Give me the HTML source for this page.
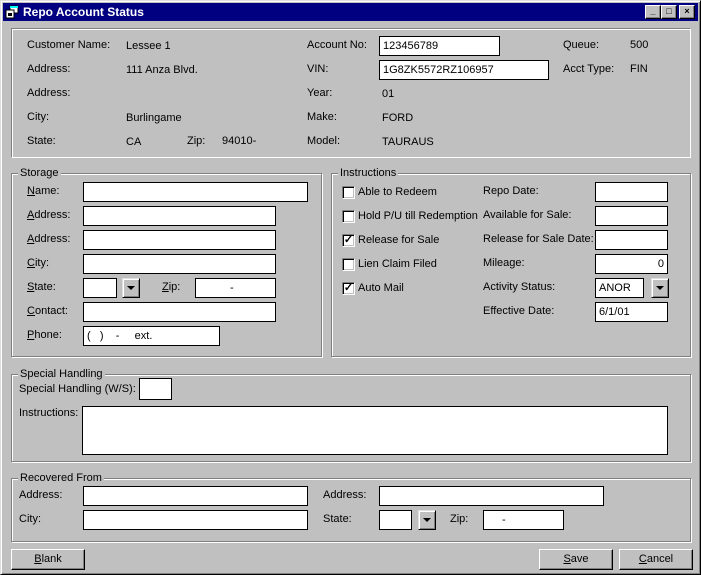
<!DOCTYPE html>
<html><head><meta charset="utf-8"><style>
*{box-sizing:border-box;margin:0;padding:0}
body{width:701px;height:575px;background:#c0c0c0;font-family:"Liberation Sans",Arial,sans-serif;font-size:11px;color:#000;position:relative;overflow:hidden}
.win{position:absolute;left:0;top:0;width:701px;height:575px;border:1px solid;border-color:#dfdfdf #000 #000 #dfdfdf;box-shadow:inset 1px 1px #fff,inset -1px -1px #808080}
.tb{position:absolute;left:3px;top:3px;width:695px;height:18px;background:#000080;color:#fff;font-weight:bold;font-size:12px;line-height:18px;padding-left:20px}
.tbtn{position:absolute;top:5px;width:16px;height:14px;background:#c0c0c0;border:1px solid;border-color:#fff #000 #000 #fff;box-shadow:inset -1px -1px #808080;font-size:9px;line-height:11px;text-align:center;color:#000;font-weight:bold}
.a{position:absolute;white-space:nowrap}
.l{position:absolute;white-space:nowrap;line-height:13px}
.in{position:absolute;background:#fff;border:1px solid #000;height:20px;line-height:18px;padding-left:3px;white-space:nowrap}
.sunk{position:absolute;border:1px solid;border-color:#808080 #fff #fff #808080;box-shadow:inset 1px 1px #fff00,inset 0 0 #fff}
.grp{position:absolute;border:1px solid #808080;box-shadow:1px 1px #fff,inset 1px 1px #fff}
.gl{position:absolute;left:6px;top:-7px;background:#c0c0c0;padding:0 2px;line-height:13px}
.dd{position:absolute;width:18px;height:20px;background:#c0c0c0;border:1px solid;border-color:#dfdfdf #000 #000 #dfdfdf;box-shadow:inset 1px 1px #fff,inset -1px -1px #808080}
.dd:after{content:"";position:absolute;left:4px;top:7px;border-left:4px solid transparent;border-right:4px solid transparent;border-top:4px solid #000}
.cb{position:absolute;width:13px;height:13px;background:#fff;border:1px solid;border-color:#808080 #fff #fff #808080;box-shadow:inset 1px 1px #000,inset -1px -1px #c0c0c0;font-size:11px;line-height:11px;text-align:center;font-weight:bold}
.btn{position:absolute;height:21px;background:#c0c0c0;border:1px solid;border-color:#fff #000 #000 #fff;box-shadow:inset -1px -1px #808080;text-align:center;line-height:19px}
u{text-decoration:underline}
</style></head><body>
<div class="win"></div>
<div class="tb">Repo Account Status</div>
<svg class="a" style="left:5px;top:5px" width="14" height="14"><rect x="5" y="1" width="8" height="7" fill="#fff" stroke="#000"/><rect x="5" y="1" width="8" height="2" fill="#0ff"/><rect x="1" y="5" width="8" height="8" fill="#fff" stroke="#000"/><rect x="3" y="8" width="4" height="3" fill="#000"/></svg>
<div class="tbtn" style="left:645px">_</div>
<div class="tbtn" style="left:661px">□</div>
<div class="tbtn" style="left:679px;margin-left:0">×</div>

<div class="sunk" style="left:11px;top:28px;width:680px;height:130px;border-color:#808080 #fff #fff #808080;box-shadow:1px 1px #fff inset"></div>
<div class="l" style="left:27px;top:39px">Customer Name:</div><div class="l" style="left:126px;top:40px">Lessee 1</div>
<div class="l" style="left:27px;top:63px">Address:</div><div class="l" style="left:126px;top:64px">111 Anza Blvd.</div>
<div class="l" style="left:27px;top:87px">Address:</div>
<div class="l" style="left:27px;top:111px">City:</div><div class="l" style="left:126px;top:112px">Burlingame</div>
<div class="l" style="left:27px;top:135px">State:</div><div class="l" style="left:126px;top:136px">CA</div>
<div class="l" style="left:187px;top:135px">Zip:</div><div class="l" style="left:222px;top:135px">94010-</div>
<div class="l" style="left:307px;top:39px">Account No:</div><div class="in" style="left:379px;top:36px;width:121px">123456789</div>
<div class="l" style="left:307px;top:63px">VIN:</div><div class="in" style="left:379px;top:60px;width:170px">1G8ZK5572RZ106957</div>
<div class="l" style="left:307px;top:87px">Year:</div><div class="l" style="left:382px;top:88px">01</div>
<div class="l" style="left:307px;top:111px">Make:</div><div class="l" style="left:382px;top:112px">FORD</div>
<div class="l" style="left:307px;top:135px">Model:</div><div class="l" style="left:382px;top:136px">TAURAUS</div>
<div class="l" style="left:563px;top:39px">Queue:</div><div class="l" style="left:630px;top:39px">500</div>
<div class="l" style="left:563px;top:63px">Acct Type:</div><div class="l" style="left:630px;top:63px">FIN</div>

<div class="grp" style="left:11px;top:173px;width:311px;height:184px"><div class="gl">Storage</div></div>
<div class="l" style="left:27px;top:185px"><u>N</u>ame:</div><div class="in" style="left:83px;top:182px;width:225px"></div>
<div class="l" style="left:27px;top:209px"><u>A</u>ddress:</div><div class="in" style="left:83px;top:206px;width:193px"></div>
<div class="l" style="left:27px;top:233px"><u>A</u>ddress:</div><div class="in" style="left:83px;top:230px;width:193px"></div>
<div class="l" style="left:27px;top:257px"><u>C</u>ity:</div><div class="in" style="left:83px;top:254px;width:193px"></div>
<div class="l" style="left:27px;top:281px"><u>S</u>tate:</div><div class="in" style="left:83px;top:278px;width:34px"></div><div class="dd" style="left:122px;top:278px"></div>
<div class="l" style="left:162px;top:281px"><u>Z</u>ip:</div><div class="in" style="left:195px;top:278px;width:81px;padding-left:34px">-</div>
<div class="l" style="left:27px;top:305px"><u>C</u>ontact:</div><div class="in" style="left:83px;top:302px;width:193px"></div>
<div class="l" style="left:27px;top:329px"><u>P</u>hone:</div><div class="in" style="left:83px;top:326px;width:137px">(&nbsp;&nbsp;&nbsp;)&nbsp;&nbsp;&nbsp;&nbsp;-&nbsp;&nbsp;&nbsp;&nbsp;&nbsp;ext.</div>

<div class="grp" style="left:331px;top:173px;width:360px;height:184px"><div class="gl">Instructions</div></div>
<div class="cb" style="left:342px;top:186px"></div><div class="l" style="left:358px;top:186px">Able to Redeem</div>
<div class="cb" style="left:342px;top:210px"></div><div class="l" style="left:358px;top:210px">Hold P/U till Redemption</div>
<div class="cb" style="left:342px;top:234px">✓</div><div class="l" style="left:358px;top:234px">Release for Sale</div>
<div class="cb" style="left:342px;top:258px"></div><div class="l" style="left:358px;top:258px">Lien Claim Filed</div>
<div class="cb" style="left:342px;top:282px">✓</div><div class="l" style="left:358px;top:282px">Auto Mail</div>
<div class="l" style="left:483px;top:185px">Repo Date:</div><div class="in" style="left:595px;top:182px;width:73px"></div>
<div class="l" style="left:483px;top:209px">Available for Sale:</div><div class="in" style="left:595px;top:206px;width:73px"></div>
<div class="l" style="left:483px;top:233px">Release for Sale Date:</div><div class="in" style="left:595px;top:230px;width:73px"></div>
<div class="l" style="left:483px;top:257px">Mileage:</div><div class="in" style="left:595px;top:254px;width:73px;text-align:right;padding-right:3px">0</div>
<div class="l" style="left:483px;top:281px">Activity Status:</div><div class="in" style="left:595px;top:278px;width:49px">ANOR</div><div class="dd" style="left:651px;top:278px"></div>
<div class="l" style="left:483px;top:305px">Effective Date:</div><div class="in" style="left:595px;top:302px;width:73px">6/1/01</div>

<div class="grp" style="left:11px;top:374px;width:680px;height:88px"><div class="gl">Special Handling</div></div>
<div class="l" style="left:19px;top:383px">Special Handling (W/S):</div><div class="in" style="left:139px;top:378px;width:33px;height:22px"></div>
<div class="l" style="left:19px;top:407px">Instructions:</div><div class="in" style="left:82px;top:406px;width:586px;height:49px"></div>

<div class="grp" style="left:11px;top:478px;width:680px;height:64px"><div class="gl">Recovered From</div></div>
<div class="l" style="left:19px;top:489px">Address:</div><div class="in" style="left:83px;top:486px;width:225px"></div>
<div class="l" style="left:19px;top:513px">City:</div><div class="in" style="left:83px;top:510px;width:225px"></div>
<div class="l" style="left:323px;top:489px">Address:</div><div class="in" style="left:379px;top:486px;width:225px"></div>
<div class="l" style="left:323px;top:513px">State:</div><div class="in" style="left:379px;top:510px;width:33px"></div><div class="dd" style="left:418px;top:510px"></div>
<div class="l" style="left:450px;top:513px">Zip:</div><div class="in" style="left:483px;top:510px;width:81px;padding-left:18px">-</div>

<div class="btn" style="left:11px;top:549px;width:74px"><u>B</u>lank</div>
<div class="btn" style="left:539px;top:549px;width:74px"><u>S</u>ave</div>
<div class="btn" style="left:619px;top:549px;width:74px"><u>C</u>ancel</div>
</body></html>
